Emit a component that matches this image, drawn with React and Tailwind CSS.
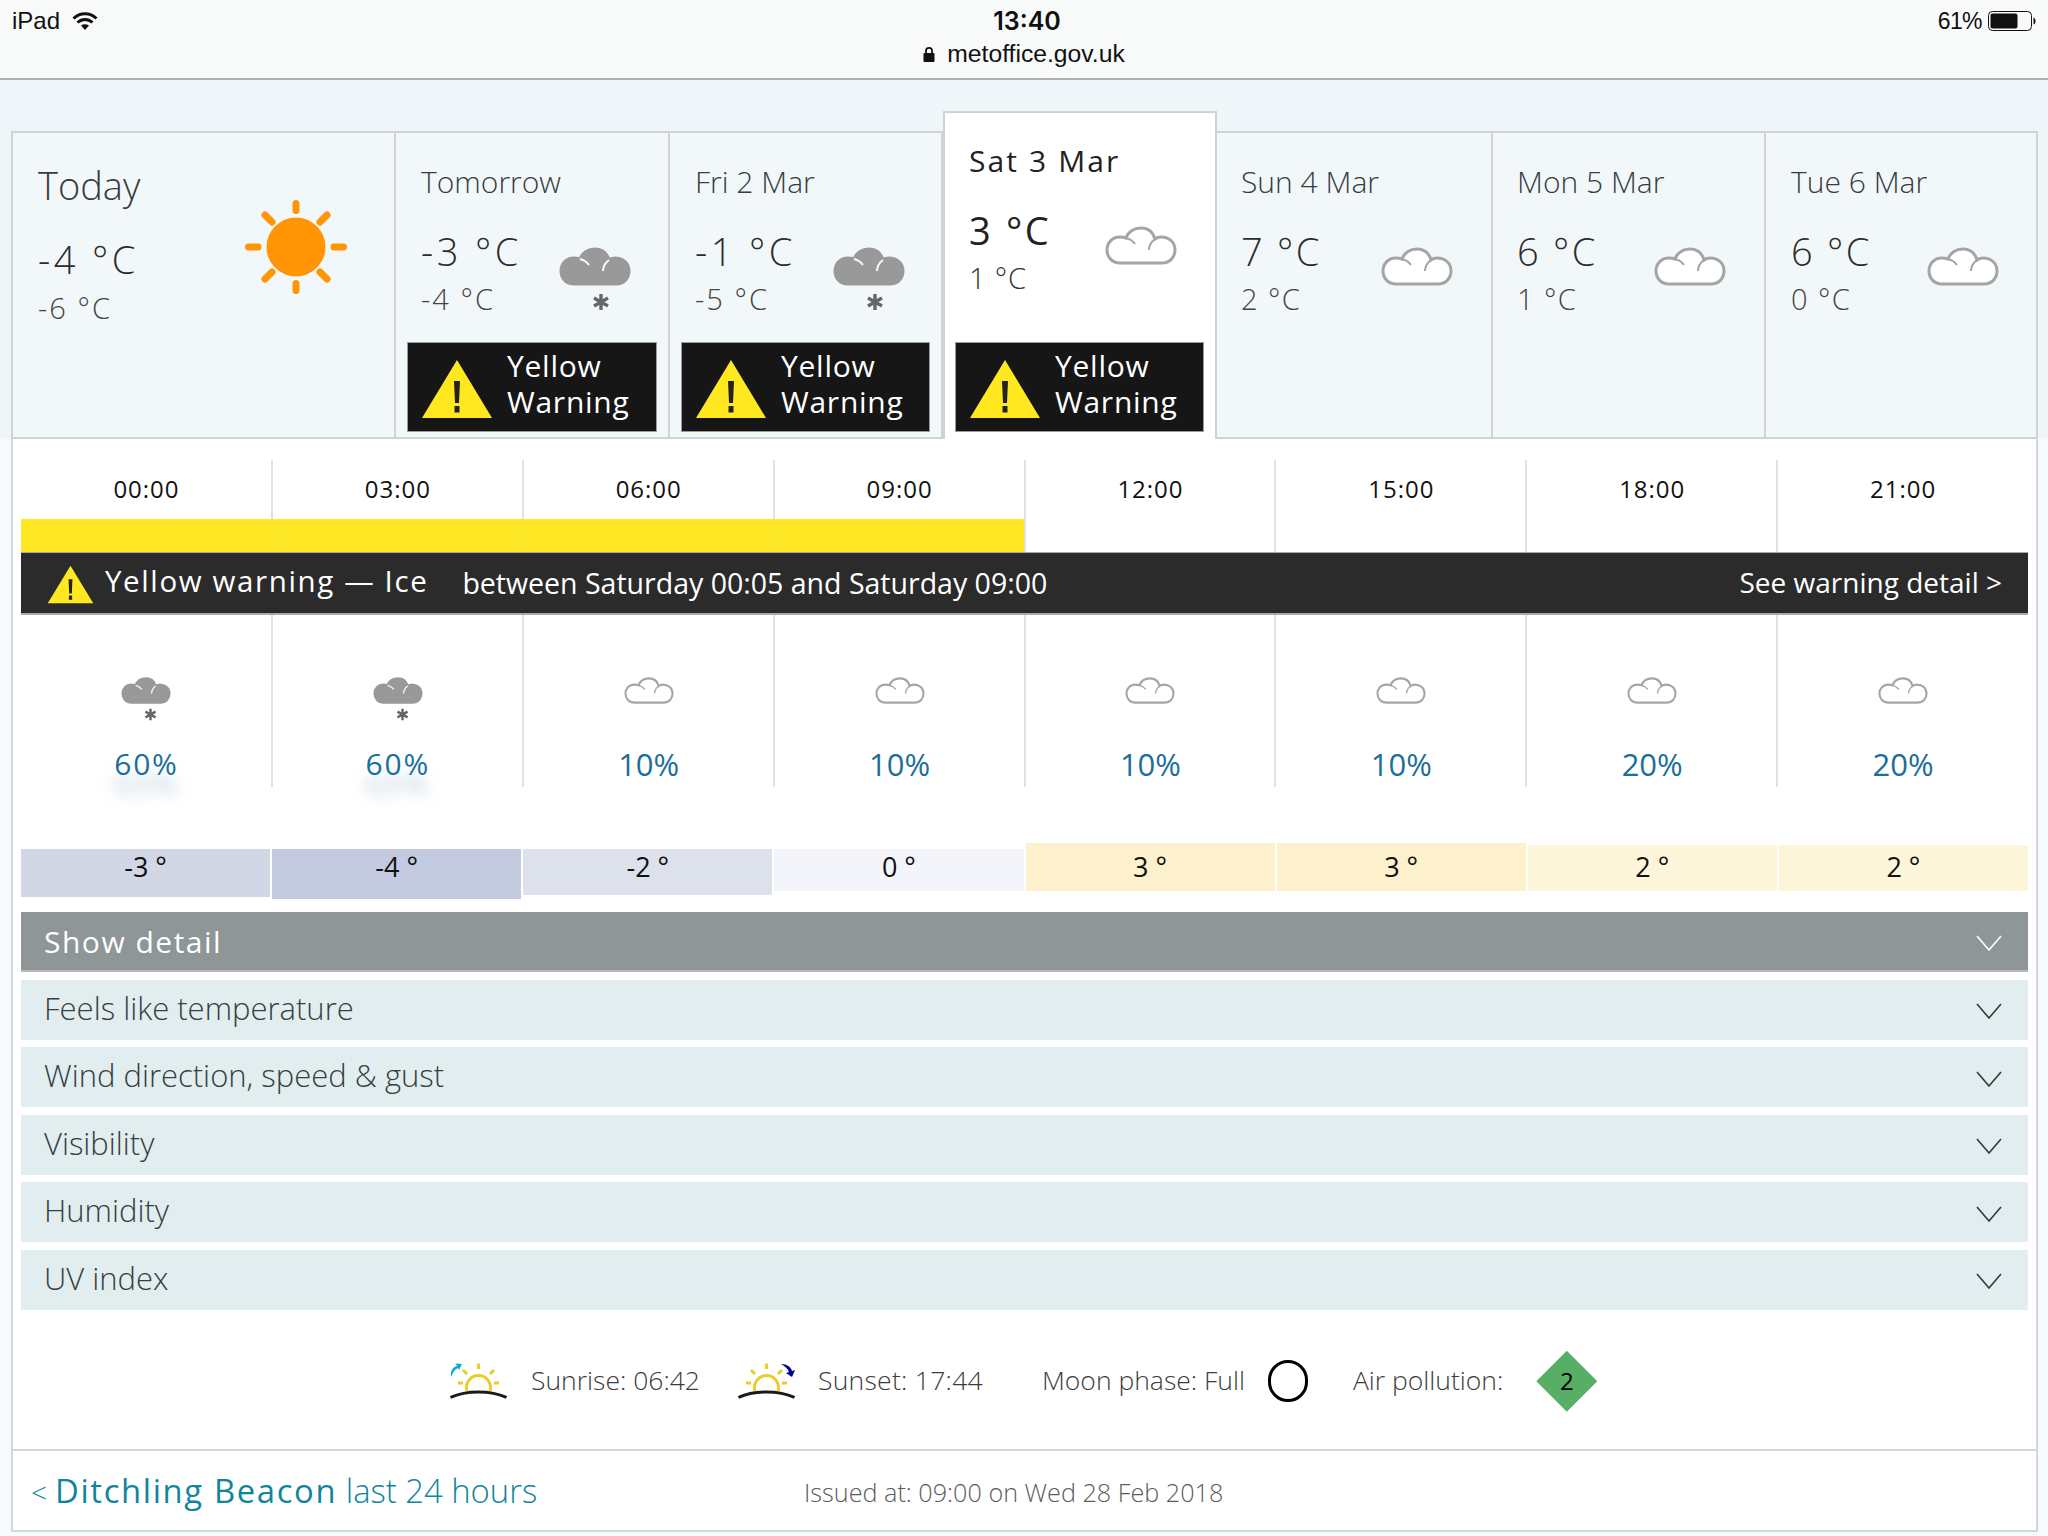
import React from "react";

const Cloud = ({ snow = false, className = "" }) => (
  <svg viewBox="0 0 72 39" className={className}>
    <path
      d="M15 37H57C65 37 70 31 70 24C70 16 64 11 56 11C54 11 52 11.5 50 13C48 6 43 2 36 2C29 2 23 6 21 12C19 11.3 17 11 15 11C7 11 2 17 2 24C2 31 7 37 15 37Z"
      fill={snow ? "#999999" : "#ffffff"}
      stroke={snow ? "#999999" : "#a5a5a5"}
      strokeWidth="3"
    />
    <path d="M50 13C46 16 44 20 44 24M21 12C25 13 28 15 30 18" fill="none" stroke={snow ? "#f2f8f9" : "#a5a5a5"} strokeWidth="2" />
  </svg>
);

const Flake = ({ className = "" }) => (
  <svg viewBox="0 0 18 18" className={className}>
    <path d="M9 1V17M2 5L16 13M16 5L2 13" stroke="#666666" strokeWidth="3.4" />
  </svg>
);

const Triangle = ({ className = "" }) => (
  <svg viewBox="0 0 72 60" className={className}>
    <path d="M36 1L71 59H1Z" fill="#ffe81f" />
    <path d="M33 22H39L38 44H34Z" fill="#222222" />
    <rect x="33.5" y="47" width="5" height="6.5" fill="#222222" />
  </svg>
);

const Sun = () => (
  <svg viewBox="0 0 102 94" className="w-[102px] h-[94px]">
    <circle cx="51" cy="47" r="29.5" fill="#ff9505" />
    <g stroke="#ff9505" strokeWidth="7" strokeLinecap="round">
      <path d="M51 3.5V10.5M51 83.5V90.5M3.5 47H13M89 47H98.500M20 15L27 22M82 15L75 22M20 79L27 72M82 79L75 72" />
    </g>
  </svg>
);

const Horizon = ({ arrow }) => (
  <svg viewBox="0 0 57 36" className="w-[57px] h-[36px]">
    <path d="M17 28A12 12 0 1 1 40 28" fill="none" stroke="#eecb2c" strokeWidth="3" />
    <path d="M28.500 0.500V6M13 7L17 11M44 7L40 11M8 20H13M44 20H49" stroke="#eecb2c" strokeWidth="3" />
    <path d="M0.500 34.500C16 27 41 27 56.500 34.500" fill="none" stroke="#1a1a1a" strokeWidth="3" />
    {arrow === "up" ? (
      <path d="M1 14C0 8 3 4 7 3L5.500 0.500L12 1L9 7L8 5C5 6 3 9 1 14Z" fill="#12a9cb" />
    ) : (
      <path d="M43 1C49 1 53 4 54 8L57 7L54 14L48 10L51 9C50 6 47 3 43 1Z" fill="#00008b" />
    )}
  </svg>
);

const Chevron = ({ color }) => (
  <svg viewBox="0 0 26 16" className="w-[26px] h-[16px] mt-[3px]">
    <path d="M1 1L13 15L25 1" fill="none" stroke={color} strokeWidth="1.600" />
  </svg>
);

const YellowBox = ({ active }) => (
  <div
    className={
      active
        ? "ml-[10px] mr-[11px] mb-[7px] mt-auto h-[90px] bg-[#161616] border border-[#9a9a9a] flex items-center"
        : "ml-[11px] mr-[11px] mb-[5px] mt-auto h-[90px] bg-[#161616] border border-[#9a9a9a] flex items-center"
    }
  >
    <Triangle className="w-[72px] h-[60px] ml-[13px] mt-[4px]" />
    <div className="ml-[14px] -mt-[6px] text-white text-[30px] leading-[36px] font-normal tracking-[0.025em]">
      <div>Yellow</div>
      <div>Warning</div>
    </div>
  </div>
);

const days = [
  { label: "Tomorrow", hi: "-3 °C", lo: "-4 °C", snow: true, warn: true, width: "w-[274px]", pad: "pl-[25px] pr-[37px]" },
  { label: "Fri 2 Mar", hi: "-1 °C", lo: "-5 °C", snow: true, warn: true, width: "w-[273px]", pad: "pl-[25px] pr-[36px]" },
  { label: "Sat 3 Mar", hi: "3 °C", lo: "1 °C", warn: true, active: true, width: "w-[274px]", pad: "pl-[24px] pr-[38px]" },
  { label: "Sun 4 Mar", hi: "7 °C", lo: "2 °C", width: "w-[276px]", pad: "pl-[24px] pr-[38px]" },
  { label: "Mon 5 Mar", hi: "6 °C", lo: "1 °C", width: "w-[273px]", pad: "pl-[24px] pr-[38px]" },
  { label: "Tue 6 Mar", hi: "6 °C", lo: "0 °C", width: "w-[272px]", pad: "pl-[25px] pr-[37px]" },
];

const DayTab = ({ day }) => (
  <div
    className={
      day.active
        ? `${day.width} h-[328px] bg-white border-x-2 border-t-2 border-[#d0d3d4] flex flex-col pt-[30px]`
        : `${day.width} h-[308px] bg-[#f2f8f9] border-t-2 border-b-2 border-r-2 border-[#d0d3d4] flex flex-col pt-[31px]`
    }
  >
    <div
      className={
        day.active
          ? `${day.pad} text-[30px] leading-[36px] font-normal tracking-[0.07em] text-[#222222]`
          : `${day.pad} text-[30px] leading-[36px] text-[#363c40]`
      }
    >
      {day.label}
    </div>
    <div className={`${day.pad} mt-[31px] flex justify-between`}>
      <div>
        <div
          className={
            day.active
              ? "text-[38px] leading-[40px] font-normal tracking-[0.07em] text-[#222222]"
              : day.snow
                ? "text-[38px] leading-[40px] tracking-[0.09em] text-[#2c2c2c]"
                : "text-[38px] leading-[40px] tracking-[0.06em] text-[#2c2c2c]"
          }
        >
          {day.hi}
        </div>
        <div
          className={
            day.active
              ? "mt-[10px] text-[29px] leading-[36px] tracking-[0.03em] text-[#333333]"
              : day.snow
                ? "mt-[10px] text-[29px] leading-[36px] tracking-[0.07em] text-[#444444]"
                : "mt-[10px] text-[29px] leading-[36px] tracking-[0.05em] text-[#444444]"
          }
        >
          {day.lo}
        </div>
      </div>
      <div className="mt-[16px] w-[72px]">
        <Cloud snow={day.snow} className="w-[72px] h-[39px]" />
        {day.snow && <Flake className="w-[18px] h-[18px] ml-[33px] mt-[7px]" />}
      </div>
    </div>
    {day.warn && <YellowBox active={day.active} />}
  </div>
);

const hours = [
  { t: "00:00", w: true, rain: "60%", snow: true },
  { t: "03:00", w: true, rain: "60%", snow: true },
  { t: "06:00", w: true, rain: "10%" },
  { t: "09:00", w: true, rain: "10%" },
  { t: "12:00", rain: "10%" },
  { t: "15:00", rain: "10%" },
  { t: "18:00", rain: "20%" },
  { t: "21:00", rain: "20%" },
];

const temps = [
  { v: "-3 °", c: "mt-[6px] h-[48px] pt-[6px] bg-[#d2d7e6]" },
  { v: "-4 °", c: "mt-[6px] h-[50px] pt-[6px] bg-[#c4cadf]" },
  { v: "-2 °", c: "mt-[6px] h-[46px] pt-[6px] bg-[#dde1ec]" },
  { v: "0 °", c: "mt-[6px] h-[42px] pt-[6px] bg-[#f3f5fa]" },
  { v: "3 °", c: "h-[48px] pt-[12px] bg-[#fdf0cc]" },
  { v: "3 °", c: "h-[48px] pt-[12px] bg-[#fdf0cc]" },
  { v: "2 °", c: "mt-[2px] h-[46px] pt-[10px] bg-[#fdf5da]" },
  { v: "2 °", c: "mt-[2px] h-[46px] pt-[10px] bg-[#fdf5da]" },
];

const details = ["Feels like temperature", "Wind direction, speed & gust", "Visibility", "Humidity", "UV index"];

export default function App() {
  return (
    <div className="w-[2048px] h-[1536px] overflow-hidden bg-[#f5fafc] font-['Open_Sans',sans-serif] font-light text-[#333333]">
      {/* ios status bar */}
      <div className="h-[80px] bg-[#f8f9f9] border-b-2 border-[#abafb1] font-['Liberation_Sans',sans-serif] font-normal text-[#111111] text-[24px] leading-[28px]">
        <div className="grid grid-cols-3 px-[12px] pt-[7px]">
          <div className="flex items-center gap-[12px]">
            <span>iPad</span>
            <svg viewBox="0 0 26 20" className="w-[26px] h-[20px]">
              <path d="M1.500 7.500C8 1 18 1 24.500 7.500M5.500 11.500C10 7.500 16 7.500 20.500 11.500" fill="none" stroke="#111111" strokeWidth="3" />
              <path d="M9 14.500C11.500 12.800 14.500 12.800 17 14.500L13 19Z" fill="#111111" />
            </svg>
          </div>
          <div className="pl-[6px] text-center font-['Inter',sans-serif] font-semibold text-[25px]">13:40</div>
          <div className="flex items-center justify-end gap-[6px]">
            <span className="text-[23px] tracking-tight">61%</span>
            <svg viewBox="0 0 48 20" className="w-[48px] h-[20px]">
              <rect x="0.500" y="0.500" width="43" height="19" rx="4" fill="none" stroke="#111111" />
              <rect x="2.500" y="2.500" width="27" height="15" rx="2" fill="#111111" />
              <path d="M45.500 6.500C47 7 47.500 8.500 47.500 10C47.500 11.500 47 13 45.500 13.500Z" fill="#111111" />
            </svg>
          </div>
        </div>
        <div className="flex justify-center items-center gap-[12px] mt-[5px] text-[24.700px]">
          <svg viewBox="0 0 12 16" className="w-[12px] h-[16px]">
            <path d="M3 7V4.500C3 1 9 1 9 4.500V7" fill="none" stroke="#111111" strokeWidth="1.800" />
            <rect x="0.500" y="7" width="11" height="9" rx="1" fill="#111111" />
          </svg>
          <span>metoffice.gov.uk</span>
        </div>
      </div>

      <div className="h-[31px] bg-[#eff6f9]" />

      {/* day tabs */}
      <div className="pl-[11px] pr-[10px] flex items-end h-[328px] bg-[#eff6f9]">
        <div className="w-[385px] h-[308px] bg-[#f2f8f9] border-2 border-[#d0d3d4] flex justify-between pl-[25px] pr-[47px]">
          <div className="pt-[28px]">
            <div className="text-[38px] leading-[48px] text-[#363c40]">Today</div>
            <div className="mt-[28px] text-[38px] leading-[44px] tracking-[0.09em] text-[#2c2c2c]">-4 °C</div>
            <div className="mt-[7px] text-[29px] leading-[40px] tracking-[0.07em] text-[#444444]">-6 °C</div>
          </div>
          <div className="mt-[67px]">
            <Sun />
          </div>
        </div>
        {days.map((day) => (
          <DayTab key={day.label} day={day} />
        ))}
      </div>

      {/* forecast panel */}
      <div className="ml-[11px] mr-[10px] h-[1093px] bg-white border-x-2 border-b-2 border-[#d4d7d8] flex flex-col">
        <div className="px-[8px] pt-[21px]">
          <div className="grid grid-cols-8 h-[92px]">
            {hours.map((h, i) => (
              <div key={h.t} className="flex flex-col">
                <div
                  className={
                    (h.w ? "h-[59px] " : "h-[92px] ") +
                    (i > 0 ? "-ml-[1px] border-l-2 border-[#dfe1e2] " : "") +
                    "text-center text-[24px] leading-[58px] tracking-[0.04em] font-normal text-[#111111]"
                  }
                >
                  {h.t}
                </div>
                {h.w && <div className={i > 0 ? "h-[33px] bg-[#ffe926] border-l border-[#f8e33a]" : "h-[33px] bg-[#ffe926]"} />}
              </div>
            ))}
          </div>

          <div className="h-[63px] bg-[#2b2b2b] border-t border-b-2 border-[#a9a9a9] flex items-center text-white pl-[26px] pr-[26px]">
            <Triangle className="w-[47px] h-[39px] mt-[3px]" />
            <div className="ml-[11px] text-[29.500px] font-normal tracking-[0.055em] -mt-[4px]">
              Yellow warning — Ice
            </div>
            <div className="ml-[34px] text-[28.500px] font-normal">between Saturday 00:05 and Saturday 09:00</div>
            <div className="ml-auto text-[28px] font-normal -mt-[3px]">See warning detail &gt;</div>
          </div>

          <div className="grid grid-cols-8 h-[172px]">
            {hours.map((h, i) => (
              <div key={h.t} className={i > 0 ? "-ml-[1px] border-l-2 border-[#dfe1e2] flex flex-col items-center pt-[62px]" : "flex flex-col items-center pt-[62px]"}>
                <div className="w-[50px] h-[48px]">
                  <Cloud snow={h.snow} className="w-[50px] h-[27px]" />
                  {h.snow && <Flake className="w-[13px] h-[13px] ml-[23px] mt-[4px]" />}
                </div>
                {h.snow ? (
                  <div className="mt-[21px] text-[30px] leading-[36px] font-medium tracking-[0.06em] text-[#1b6f99] [text-shadow:0_20px_14px_rgba(120,165,190,0.5)]">
                    {h.rain}
                  </div>
                ) : (
                  <div className="mt-[21px] text-[31px] leading-[36px] font-normal text-[#1b6f99]">{h.rain}</div>
                )}
              </div>
            ))}
          </div>

          <div className="grid grid-cols-8 gap-x-[2px] h-[56px] mt-[56px]">
            {temps.map((t, i) => (
              <div key={i} className={`${t.c} text-center text-[27px] leading-[24px] font-normal text-[#111111]`}>
                {t.v}
              </div>
            ))}
          </div>

          <div className="mt-[13px] flex flex-col gap-[7.500px]">
            <div className="h-[60px] bg-[#8e9697] border-b-2 border-[#b5babb] flex items-center justify-between pl-[23px] pr-[26px] text-white text-[30px] font-normal tracking-[0.05em]">
              <span>Show detail</span>
              <Chevron color="#ffffff" />
            </div>
            {details.map((d) => (
              <div key={d} className="h-[60px] bg-[#e2edef] flex items-center justify-between pl-[23px] pr-[26px] text-[#363f42] text-[31px]">
                <span className="-mt-[3px]">{d}</span>
                <Chevron color="#333a3d" />
              </div>
            ))}
          </div>
        </div>

        {/* sun, moon and air quality */}
        <div className="flex-1 flex items-center pl-[437px] pt-[4px] text-[26.500px] text-[#3c3c3c]">
          <Horizon arrow="up" />
          <span className="ml-[24px]">Sunrise: 06:42</span>
          <div className="ml-[38px]">
            <Horizon arrow="down" />
          </div>
          <span className="ml-[23px] tracking-[0.01em]">Sunset: 17:44</span>
          <span className="ml-[59px]">Moon phase: Full</span>
          <div className="ml-[23px] w-[40px] h-[42px] rounded-full border-[3px] border-black" />
          <span className="ml-[45px]">Air pollution:</span>
          <div className="ml-[33px] w-[61px] h-[61px] bg-[#57ae65] [clip-path:polygon(50%_0,100%_50%,50%_100%,0_50%)] flex items-center justify-center text-[24px] font-normal text-black">
            2
          </div>
        </div>

        <div className="h-[81px] border-t-2 border-[#d4d7d8] flex items-center pl-[18px]">
          <div className="w-[773px] text-[32.800px] text-[#10859e]">
            <span className="text-[28px] mr-[8px]">&lt;</span>
            <span className="font-normal tracking-[0.05em]">Ditchling Beacon</span> <span>last 24 hours</span>
          </div>
          <div className="mt-[4px] text-[25.200px] text-[#5c5c5c]">Issued at: 09:00 on Wed 28 Feb 2018</div>
        </div>
      </div>
    </div>
  );
}
